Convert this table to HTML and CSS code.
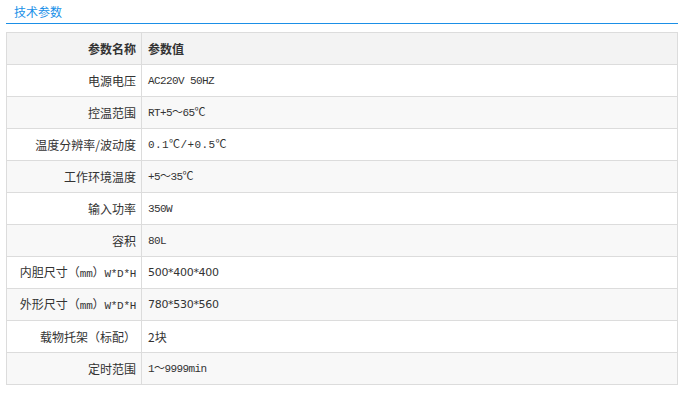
FILE: index.html
```html
<!DOCTYPE html>
<html lang="zh">
<head>
<meta charset="utf-8">
<link rel="stylesheet" href="styles.css">
</head>
<body>
<div class="wrap">
  <div class="tab"><span class="tab-title">技术参数</span></div>
  <table class="params">
    <tr class="head"><th class="k">参数名称</th><th class="v">参数值</th></tr>
    <tr><td class="k">电源电压</td><td class="v mono">AC220V 50HZ</td></tr>
    <tr class="alt"><td class="k">控温范围</td><td class="v mono">RT+5～65℃</td></tr>
    <tr><td class="k">温度分辨率/波动度</td><td class="v mono wide">0.1℃/+0.5℃</td></tr>
    <tr class="alt"><td class="k">工作环境温度</td><td class="v mono">+5～35℃</td></tr>
    <tr><td class="k">输入功率</td><td class="v mono">350W</td></tr>
    <tr class="alt"><td class="k">容积</td><td class="v mono">80L</td></tr>
    <tr><td class="k">内胆尺寸（<span class="mono">mm</span>）<span class="mono">W*D*H</span></td><td class="v sans">500*400*400</td></tr>
    <tr class="alt"><td class="k">外形尺寸（<span class="mono">mm</span>）<span class="mono">W*D*H</span></td><td class="v sans">780*530*560</td></tr>
    <tr><td class="k">载物托架（标配）</td><td class="v">2块</td></tr>
    <tr class="alt"><td class="k">定时范围</td><td class="v mono">1～9999min</td></tr>
  </table>
</div>
</body>
</html>
```
FILE: styles.css
```css
html, body {
  margin: 0;
  padding: 0;
  background: #fff;
}
body {
  font-family: "Noto Sans CJK SC", "Liberation Sans", sans-serif;
  font-size: 12px;
  color: #333;
}
.wrap {
  width: 672px;
  padding: 0 6px;
}
.tab {
  height: 23px;
  border-bottom: 1px solid #1b8fe6;
  padding-left: 8px;
  box-sizing: content-box;
}
.tab-title {
  display: inline-block;
  line-height: 14px;
  padding-top: 5px;
  color: #1890e8;
  font-size: 12px;
}
.params {
  margin-top: 8px;
  width: 672px;
  border-collapse: collapse;
  border: 1px solid #dcdcdc;
  table-layout: fixed;
}
.params th, .params td {
  border: 1px solid #dcdcdc;
  height: 31px;
  padding: 0;
  box-sizing: border-box;
  vertical-align: middle;
  line-height: 14px;
}
.params tr {
  height: 32px;
}
.params .k {
  width: 135px;
  text-align: right;
  padding-right: 5px;
  white-space: nowrap;
}
.params .v {
  text-align: left;
  padding-left: 6px;
}
.params .head {
  background: #f3f3f3;
}
.params .head th {
  font-weight: bold;
  color: #333;
}
.params .alt {
  background: #f8f8f8;
}
.mono {
  font-family: "Liberation Mono", "Noto Sans CJK SC", monospace;
  font-size: 11px;
  letter-spacing: -0.6px;
}
.k .mono {
  letter-spacing: -0.3px;
}
.wide {
  letter-spacing: 0.4px;
}
.sans {
  font-family: "DejaVu Sans", "Liberation Sans", sans-serif;
  font-size: 11px;
  letter-spacing: -0.3px;
}
```
